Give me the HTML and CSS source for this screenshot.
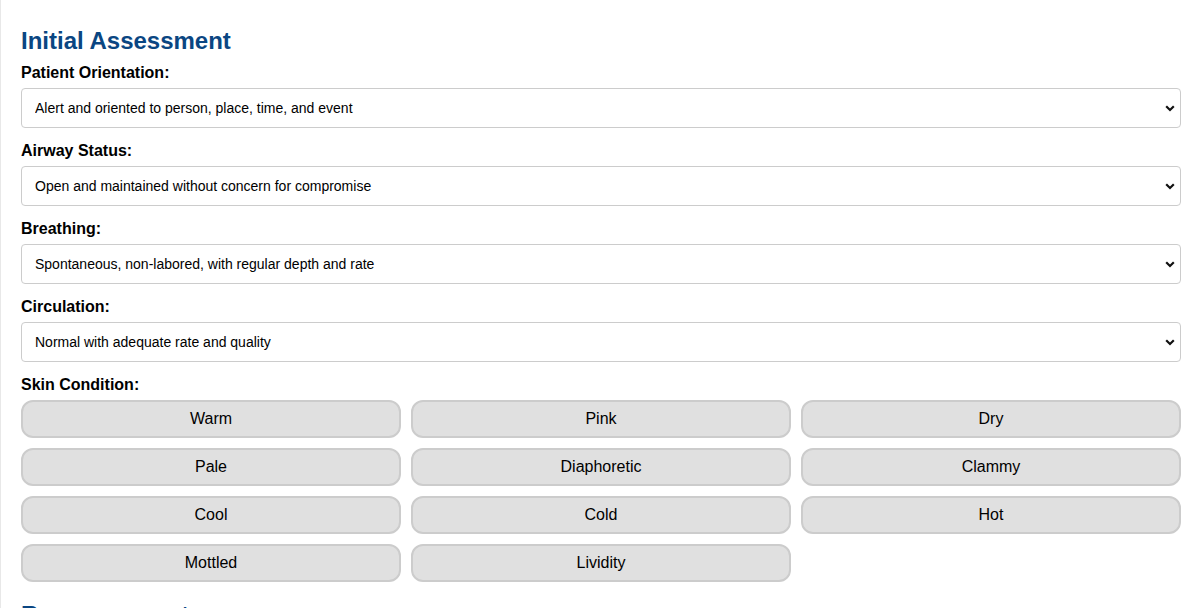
FILE: index.html
```html
<!DOCTYPE html>
<html lang="en">
<head>
  <meta charset="UTF-8">
  <title>Initial Assessment</title>
  <link rel="stylesheet" href="styles.css">
</head>
<body>

  <!-- Initial Assessment -->
  <div class="container">
    <section class="assessment">
      <h2>Initial Assessment</h2>

      <label for="orientation">Patient Orientation:</label>
      <div class="select-wrap">
        <select id="orientation">
          <option>Alert and oriented to person, place, time, and event</option>
        </select>
        <svg class="chevron" width="10" height="7" viewBox="0 0 10 7"><path d="M1.2 1.3 L5 5 L8.8 1.3" fill="none" stroke="#111" stroke-width="2.2"/></svg>
      </div>

      <label for="airway">Airway Status:</label>
      <div class="select-wrap">
        <select id="airway">
          <option>Open and maintained without concern for compromise</option>
        </select>
        <svg class="chevron" width="10" height="7" viewBox="0 0 10 7"><path d="M1.2 1.3 L5 5 L8.8 1.3" fill="none" stroke="#111" stroke-width="2.2"/></svg>
      </div>

      <label for="breathing">Breathing:</label>
      <div class="select-wrap">
        <select id="breathing">
          <option>Spontaneous, non-labored, with regular depth and rate</option>
        </select>
        <svg class="chevron" width="10" height="7" viewBox="0 0 10 7"><path d="M1.2 1.3 L5 5 L8.8 1.3" fill="none" stroke="#111" stroke-width="2.2"/></svg>
      </div>

      <label for="circulation">Circulation:</label>
      <div class="select-wrap">
        <select id="circulation">
          <option>Normal with adequate rate and quality</option>
        </select>
        <svg class="chevron" width="10" height="7" viewBox="0 0 10 7"><path d="M1.2 1.3 L5 5 L8.8 1.3" fill="none" stroke="#111" stroke-width="2.2"/></svg>
      </div>

      <label>Skin Condition:</label>
      <div class="skin-grid">
        <button type="button">Warm</button>
        <button type="button">Pink</button>
        <button type="button">Dry</button>
        <button type="button">Pale</button>
        <button type="button">Diaphoretic</button>
        <button type="button">Clammy</button>
        <button type="button">Cool</button>
        <button type="button">Cold</button>
        <button type="button">Hot</button>
        <button type="button">Mottled</button>
        <button type="button">Lividity</button>
      </div>
    </section>

    <section class="assessment">
      <h2>Reassessment</h2>
    </section>
  </div>

</body>
</html>
```

FILE: styles.css
```css
body {
  margin: 0;
  padding: 0;
  font-family: Arial, "Liberation Sans", sans-serif;
  background: #fff;
  color: #000;
}

.container {
  border-left: 1px solid #e8e8e8;
  padding: 20px 17px 20px 20px;
}

.assessment h2 {
  margin: 7px 0 9px;
  font-size: 24px;
  color: #0a4682;
}

.assessment + .assessment h2 {
  margin-top: 19px;
}

.assessment label {
  display: block;
  font-size: 16px;
  font-weight: bold;
  margin-bottom: 6px;
}

.select-wrap {
  position: relative;
  margin-bottom: 14px;
}

.select-wrap select {
  display: block;
  width: 100%;
  height: 40px;
  padding: 0 30px 0 13px;
  font-family: Arial, "Liberation Sans", sans-serif;
  font-size: 14px;
  color: #000;
  background: #fff;
  border: 1px solid #ccc;
  border-radius: 4px;
  appearance: none;
  -webkit-appearance: none;
}

.chevron {
  position: absolute;
  right: 6px;
  top: 17px;
  pointer-events: none;
}

.skin-grid {
  display: grid;
  grid-template-columns: repeat(3, 1fr);
  gap: 10px;
}

.skin-grid button {
  height: 38px;
  background-color: #e0e0e0;
  border: 2px solid #ccc;
  border-radius: 12px;
  font-family: Arial, "Liberation Sans", sans-serif;
  font-size: 16px;
  color: #000;
  cursor: pointer;
}

.skin-grid button:hover {
  background-color: #d4d4d4;
}
```
